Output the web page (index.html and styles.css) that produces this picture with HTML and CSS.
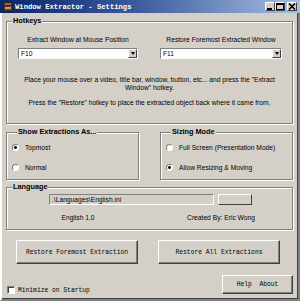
FILE: index.html
```html
<!DOCTYPE html>
<html lang="en">
<head>
    <meta charset="UTF-8">
    <meta name="viewport" content="width=device-width, initial-scale=1.0">
    <title>Window Extractor - Settings</title>
    <link rel="stylesheet" href="styles.css">
</head>
<body>
    <div class="titlebar">
        <svg class="app-icon" width="10" height="10" viewBox="0 0 10 10">
            <rect x="0.5" y="2.5" width="9" height="7" fill="#5a3a22" stroke="#2a1a10"/>
            <rect x="1" y="0.5" width="8" height="3" fill="#8a6a4a" stroke="#2a1a10" stroke-width="0.8"/>
            <rect x="2" y="5" width="6" height="2" fill="#b8a070"/>
        </svg>
        <span class="title">Window Extractor - Settings</span>
        <div class="caption-buttons">
            <span class="cap-btn">
                <svg width="8" height="7" viewBox="0 0 8 7"><rect x="1" y="5" width="5" height="2" fill="#000"/></svg>
            </span>
            <span class="cap-btn">
                <svg width="8" height="7" viewBox="0 0 8 7"><rect x="0.5" y="0.5" width="7" height="6" fill="none" stroke="#000"/><rect x="0" y="0" width="8" height="2" fill="#000"/></svg>
            </span>
            <span class="cap-btn close">
                <svg width="8" height="7" viewBox="0 0 8 7"><path d="M1 0.5 L7 6.5 M7 0.5 L1 6.5" stroke="#000" stroke-width="1.6"/></svg>
            </span>
        </div>
    </div>

    <div class="frame">
        <fieldset class="group hotkeys">
            <legend>Hotkeys</legend>
            <div class="hotkey-grid">
                <div class="hotkey">
                    <div class="label">Extract Window at Mouse Position</div>
                    <div class="select"><span>F10</span><span class="select-btn"></span></div>
                </div>
                <div class="hotkey">
                    <div class="label">Restore Foremost Extracted Window</div>
                    <div class="select"><span>F11</span><span class="select-btn"></span></div>
                </div>
            </div>
            <p class="note">Place your mouse over a video, title bar, window, button, etc... and press the "Extract<br>Window" hotkey.</p>
            <p class="note press">Press the "Restore" hotkey to place the extracted object back where it came from.</p>
        </fieldset>

        <div class="group-row">
            <fieldset class="group options">
                <legend>Show Extractions As...</legend>
                <div class="radio checked"><span class="dot"></span>Topmost</div>
                <div class="radio"><span class="dot"></span>Normal</div>
            </fieldset>
            <fieldset class="group options">
                <legend>Sizing Mode</legend>
                <div class="radio"><span class="dot"></span>Full Screen (Presentation Mode)</div>
                <div class="radio checked"><span class="dot"></span>Allow Resizing &amp; Moving</div>
            </fieldset>
        </div>

        <fieldset class="group language">
            <legend>Language</legend>
            <div class="lang-file">
                <div class="textbox">.\Languages\English.ini</div>
                <span class="browse"></span>
            </div>
            <div class="lang-info">
                <span>English 1.0</span>
                <span>Created By: Eric Wong</span>
            </div>
        </fieldset>

        <div class="actions">
            <button class="btn big">Restore Foremost Extraction</button>
            <button class="btn big">Restore All Extractions</button>
        </div>

        <div class="footer">
            <label class="check"><span class="box"></span>Minimize on Startup</label>
            <button class="btn help">Help &nbsp;About</button>
        </div>
    </div>
</body>
</html>
```

FILE: styles.css
```css
* {
    box-sizing: border-box;
}

body {
    margin: 0;
    width: 300px;
    height: 301px;
    font-family: "Liberation Sans", Arial, sans-serif;
    font-size: 6.7px;
    color: #000;
    background-color: #d4d0c8;
    overflow: hidden;
}

.titlebar {
    height: 13px;
    display: flex;
    align-items: center;
    padding: 0 3px 0 3px;
    background: linear-gradient(to right, #0a246a 0%, #3a5a9a 45%, #a6c0e4 100%);
}

.app-icon {
    flex: none;
}

.title {
    margin-left: 2px;
    font-family: "Liberation Mono", monospace;
    font-weight: bold;
    font-size: 7.2px;
    color: #fff;
    letter-spacing: 0;
}

.caption-buttons {
    margin-left: auto;
    display: flex;
}

.cap-btn {
    width: 10px;
    height: 9px;
    display: flex;
    align-items: center;
    justify-content: center;
    background-color: #d4d0c8;
    border: 1px solid;
    border-color: #fff #404040 #404040 #fff;
}

.cap-btn.close {
    margin-left: 2px;
}

.frame {
    height: 288px;
    padding: 3px 5px 0 4px;
    border-left: 2px solid #fff;
    border-right: 2px solid #808080;
    border-bottom: 2px solid #808080;
    box-shadow: inset -1px -1px 0 #404040;
}

.group {
    margin: 0;
    padding: 0;
    border: 1px solid #808080;
    box-shadow: 1px 1px 0 #fff, inset 1px 1px 0 #fff;
}

.group legend {
    margin-left: 5px;
    padding: 0 1px;
    font-weight: bold;
    font-size: 7.3px;
    line-height: 10px;
    background-color: #d4d0c8;
}

.hotkeys {
    height: 108px;
}

.hotkey-grid {
    display: grid;
    grid-template-columns: 120px 122px;
    column-gap: 22px;
    padding: 10px 0 0 11px;
}

.label {
    text-align: center;
    line-height: 8px;
}

.select {
    margin-top: 4px;
    height: 11px;
    display: flex;
    align-items: center;
    padding-left: 2px;
    background-color: #fff;
    border: 1px solid;
    border-color: #808080 #fff #fff #808080;
}

.select-btn {
    margin-left: auto;
    width: 9px;
    height: 9px;
    background-color: #d4d0c8;
    border: 1px solid;
    border-color: #fff #404040 #404040 #fff;
    display: flex;
    align-items: center;
    justify-content: center;
}

.select-btn::after {
    content: "";
    border-left: 2.5px solid transparent;
    border-right: 2.5px solid transparent;
    border-top: 3px solid #000;
}

.note {
    margin: 17px 0 0 0;
    text-align: center;
    line-height: 8px;
}

.note.press {
    margin-top: 7px;
}

.group-row {
    margin-top: 3px;
    display: flex;
    gap: 21px;
}

.options {
    width: 133px;
    height: 53px;
    padding: 5px 0 0 5px;
}

.radio {
    height: 10px;
    display: flex;
    align-items: center;
    margin-bottom: 10px;
}

.radio .dot {
    width: 7px;
    height: 7px;
    margin-right: 6px;
    border-radius: 50%;
    border: 1px solid;
    border-color: #808080 #fff #fff #808080;
    background-color: #fff;
}

.radio.checked .dot {
    background: radial-gradient(circle, #000 0, #000 1.3px, #fff 1.5px);
}

.language {
    margin-top: 2px;
    height: 48px;
}

.lang-file {
    display: flex;
    gap: 4px;
    padding: 2px 0 0 42px;
}

.textbox {
    width: 165px;
    height: 11px;
    padding-left: 2px;
    line-height: 9px;
    background-color: #d4d0c8;
    border: 1px solid;
    border-color: #808080 #fff #fff #808080;
}

.browse {
    width: 34px;
    height: 11px;
    background-color: #d4d0c8;
    border: 1px solid;
    border-color: #fff #404040 #404040 #fff;
}

.lang-info {
    display: grid;
    grid-template-columns: 120px 122px;
    column-gap: 22px;
    padding: 9px 0 0 11px;
    line-height: 8px;
    text-align: center;
}

.actions {
    margin-top: 10px;
    display: flex;
    gap: 20px;
    padding-left: 10px;
}

.btn {
    margin: 0;
    padding: 0;
    font-family: "Liberation Mono", monospace;
    font-size: 6.3px;
    color: #000;
    background-color: #d4d0c8;
    border: 1px solid;
    border-color: #fff #404040 #404040 #fff;
    box-shadow: inset -1px -1px 0 #808080;
}

.btn.big {
    width: 122px;
    height: 24px;
}

.footer {
    margin-top: 11px;
    display: flex;
    align-items: flex-start;
}

.check {
    margin-top: 11px;
    display: flex;
    align-items: center;
    font-family: "Liberation Mono", monospace;
    font-size: 6.3px;
}

.check .box {
    width: 8px;
    height: 8px;
    margin: 0 3px 0 1px;
    background-color: #fff;
    border: 1px solid;
    border-color: #808080 #fff #fff #808080;
    box-shadow: inset 1px 1px 0 #404040;
}

.btn.help {
    margin-left: auto;
    width: 71px;
    height: 19px;
}
```
